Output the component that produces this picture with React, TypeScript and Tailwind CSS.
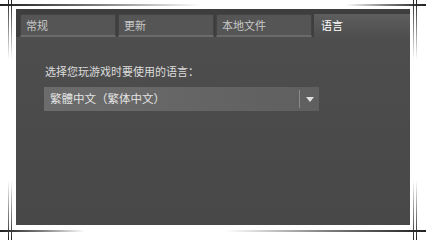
const tabs = ['常规', '更新', '本地文件'];

// one decorative frame corner: a fading horizontal rule crossed by two thin vertical rules
const Corner = ({ pos }: { pos: 'tl' | 'tr' | 'bl' | 'br' }) => {
  const top = pos === 'tl' || pos === 'tr';
  const left = pos === 'tl' || pos === 'bl';
  const place = {
    tl: 'left-0 top-0 w-[200px]',
    tr: 'right-[4px] top-0 w-[80px]',
    bl: 'left-0 bottom-0 w-[85px]',
    br: 'right-[4px] bottom-0 w-[200px]',
  }[pos];
  const hLine = left
    ? 'bg-gradient-to-r from-[#222] via-[#808080] to-transparent'
    : 'bg-gradient-to-l from-[#222] via-[#808080] to-transparent';
  const vLine = top ? 'bg-gradient-to-b from-[#222] to-transparent' : 'bg-gradient-to-t from-[#222] to-transparent';
  return (
    <div className={`absolute h-[60px] flex ${top ? 'flex-col' : 'flex-col-reverse'} ${place}`}>
      <div className={`${top ? 'mt-[4px]' : 'mb-[8px]'} h-[2px] ${hLine}`} />
      <div className={`flex-1 flex gap-[2px] ${top ? '-mt-[6px]' : '-mb-[10px] '} ${left ? 'pl-[8px]' : 'justify-end pr-[9px]'}`}>
        <div className={`w-[1px] ${vLine}`} />
        <div className={`w-[1px] ${vLine}`} />
      </div>
    </div>
  );
};

const App = () => {
  return (
    <div className="relative w-[430px] h-[240px] bg-white overflow-hidden" style={{ fontFamily: '"Noto Sans CJK SC", "Noto Sans", sans-serif' }}>
      <Corner pos="tl" />
      <Corner pos="tr" />
      <Corner pos="bl" />
      <Corner pos="br" />

      <div className="ml-[16px] mt-[9px] w-[394px] h-[216px] bg-[#484848] flex flex-col">
        <div className="flex gap-[2px] pl-[4px] pt-[5px] bg-[#3e3e3e]">
          {tabs.map((t) => (
            <div key={t} className="w-[96px] h-[23px] bg-[#555] border border-[#434343] border-b-[2px] border-b-[#6a6a6a] flex items-center pl-[5px] text-[11px] text-[#c8c8c8]">
              {t}
            </div>
          ))}
          <div className="flex-1 h-[23px] bg-gradient-to-b from-[#5e5e5e] to-[#4e4e4e] flex items-center pl-[7px] text-[11px] text-white">
            语言
          </div>
        </div>
        <div className="flex-1 bg-gradient-to-b from-[#4e4e4e] via-[#4a4a4a] to-[#484848] pl-[28px] pt-[27px]">
          <div className="text-[11px] text-[#dcdcdc] leading-[14px] pl-[1px]">选择您玩游戏时要使用的语言：</div>
          <div className="mt-[9px] w-[275px] h-[24px] bg-gradient-to-r from-[#6c6c6c] to-[#5f5f5f] flex items-center">
            <span className="flex-1 pl-[6px] text-[11.5px] text-[#e4e4e4]">繁體中文（繁体中文）</span>
            <div className="w-[1px] h-[18px] bg-[#8a8a8a]" />
            <div className="w-[19px] flex justify-center">
              <svg width="8" height="5" viewBox="0 0 8 5"><path d="M0 0 H8 L4 5 Z" fill="#e0e0e0" /></svg>
            </div>
          </div>
        </div>
      </div>
    </div>
  );
};

export default App;
